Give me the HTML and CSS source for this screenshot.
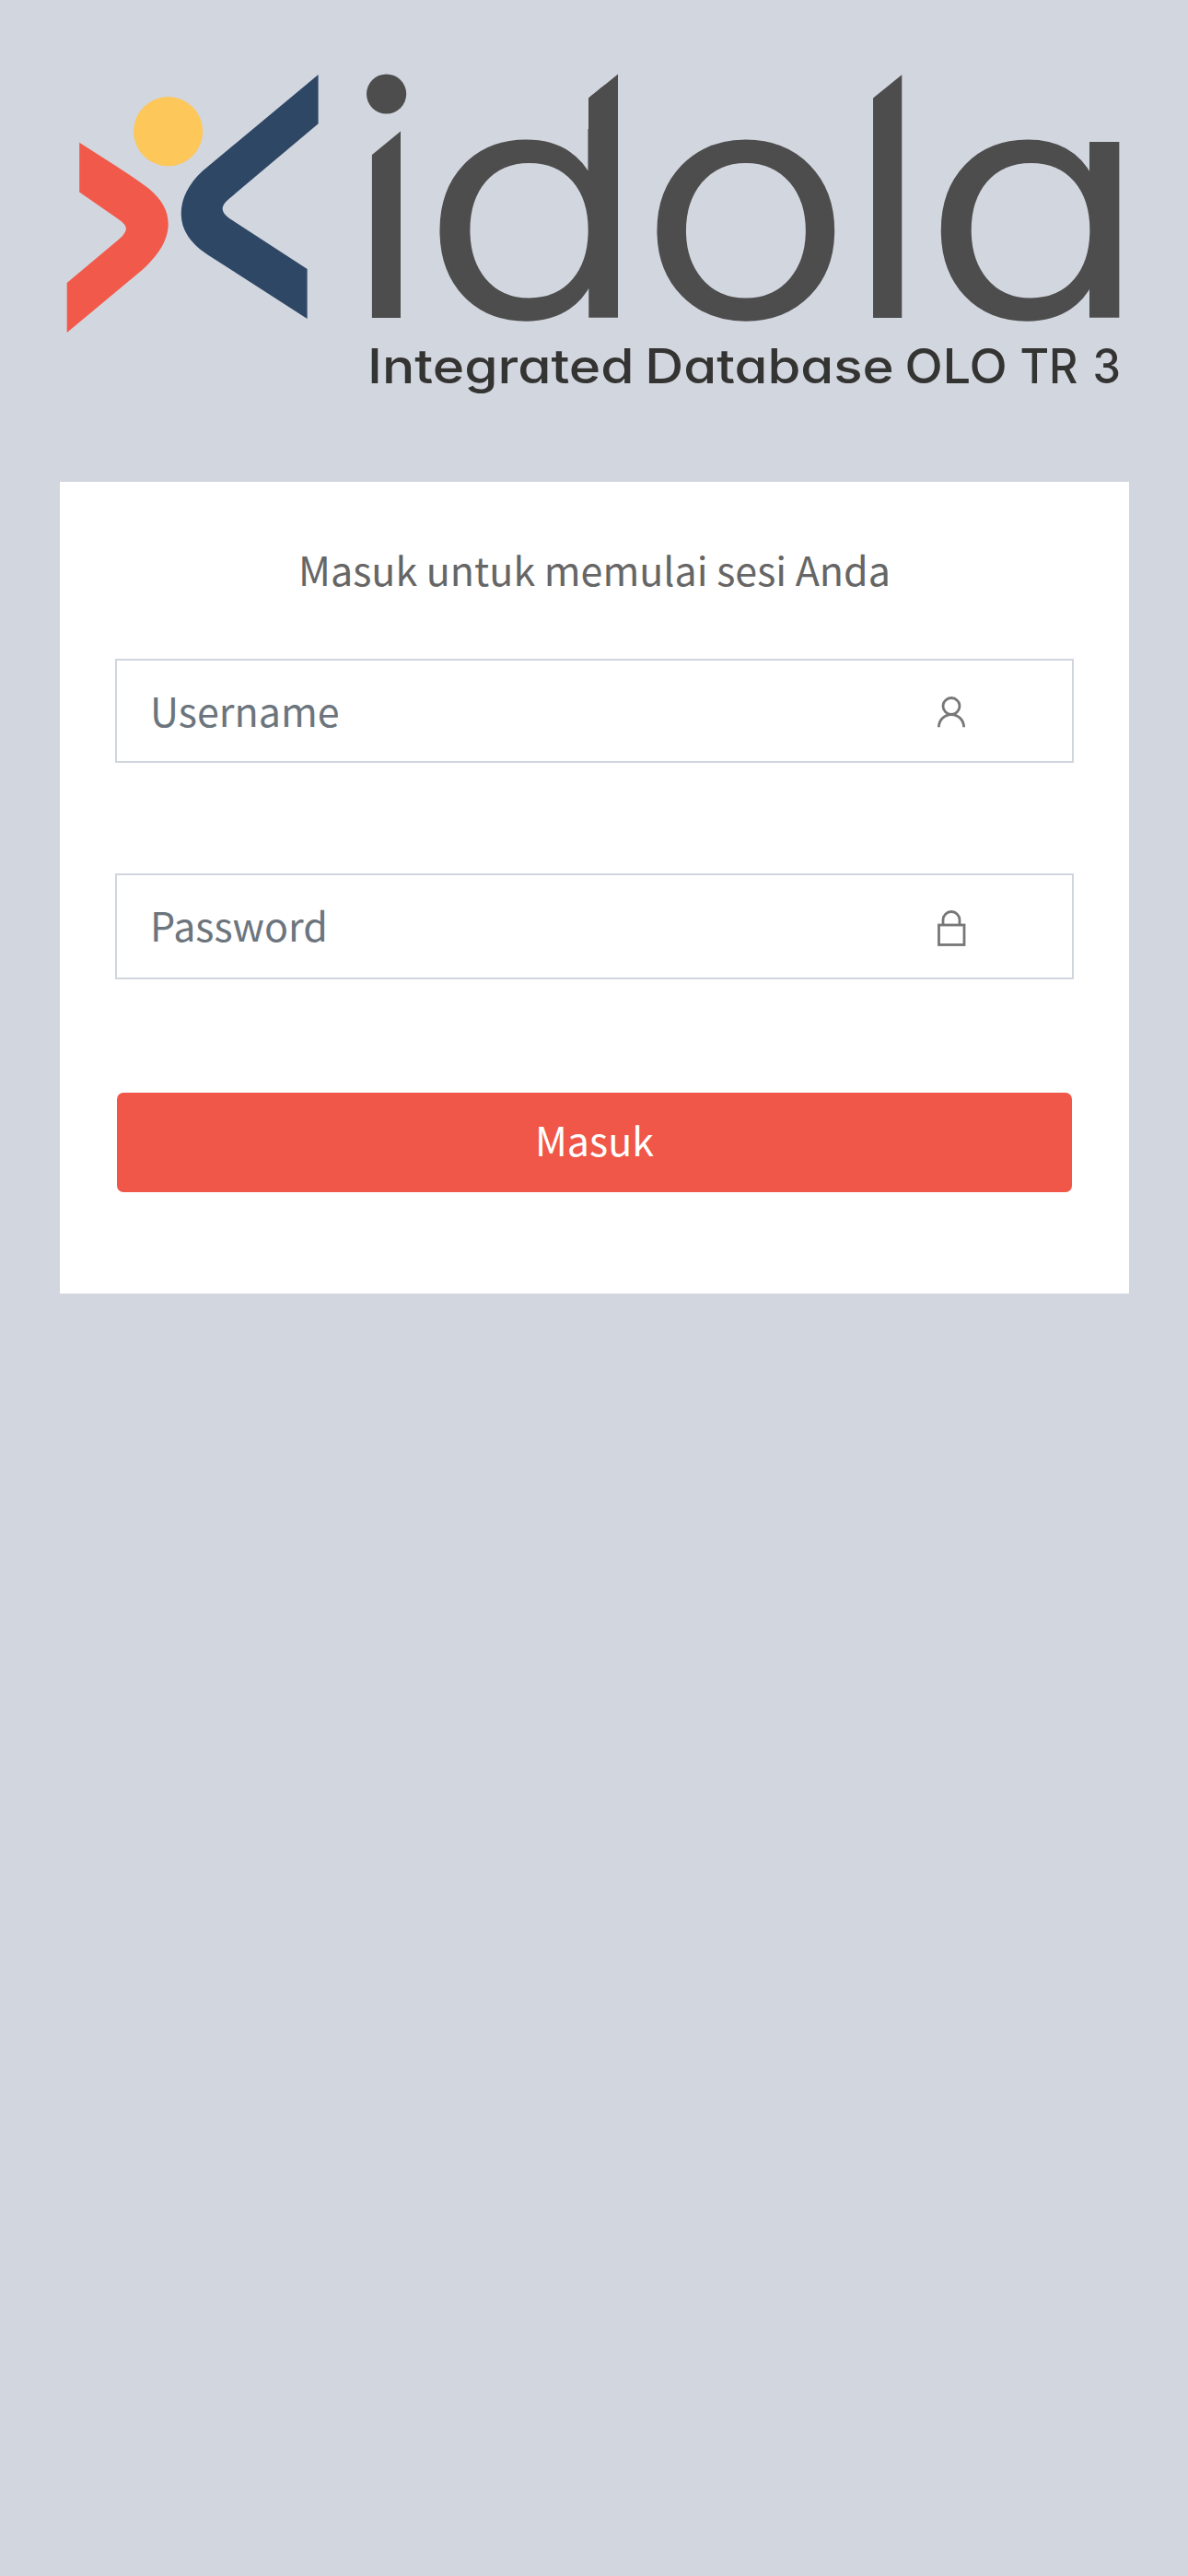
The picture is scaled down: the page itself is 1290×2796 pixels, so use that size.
FILE: index.html
```
<!DOCTYPE html>
<html lang="id">
<head>
  <meta charset="utf-8">
  <title>idola - Masuk</title>
  <link rel="stylesheet" href="styles.css">
</head>
<body>
  <main class="login">
    <svg class="logo" viewBox="65 0 1162 523" role="img" aria-label="idola">
      <defs>
        <clipPath id="cut-i"><path d="M403.7 168.3 435 142.5V345H403.7Z"/></clipPath>
        <clipPath id="cut-d"><path d="M470 140H639V106.5L671 80.5V400H470Z"/></clipPath>
        <clipPath id="cut-l"><path d="M948 106.5 979.5 81V345H948Z"/></clipPath>
      </defs>

      <!-- figure mark -->
      <path class="mark-red" d="M86.2 154.7 128 181.5Q151 196.500 162 205C176 217 182.7 229 182.7 243C182.7 260 173 276 155 292.5L72.7 361V307L128.5 260.2C140.500 250 139 245 128 237.500L86.200 208.500Z"/>
      <path class="mark-navy" d="M345.600 81V134.300L248.500 216C239 224 239.500 230 249 237L333.600 292V346L225.500 276.500C206 263.500 196.700 249 196.700 232C196.700 215 205 199.500 220 185.500Z"/>
      <circle class="mark-yellow" cx="182.600" cy="142.700" r="37.600"/>

      <!-- wordmark -->
      <circle class="dot" cx="419.600" cy="102" r="21.600"/>
      <g class="word">
        <g clip-path="url(#cut-i)"><text class="stem" transform="translate(376 345) scale(1.03 1.08)">i</text></g>
        <g clip-path="url(#cut-d)">
          <text class="bowl" transform="translate(458 342.300) scale(1.1655 .978)">d</text>
          <rect x="639" y="78" width="32" height="50"/>
        </g>
        <text class="bowl" transform="translate(694.800 342.300) scale(1.115 .978)">o</text>
        <g clip-path="url(#cut-l)"><text class="stem" transform="translate(920.400 345) scale(1.03 1.05)">l</text></g>
        <text class="bowl" transform="translate(1002.300 342.300) scale(1.1655 .978)">a</text>
      </g>

      <g class="tagline">
        <text x="399" y="415.500" textLength="289.600" lengthAdjust="spacingAndGlyphs">Integrated</text>
        <text x="700.300" y="415.500" textLength="270.500" lengthAdjust="spacingAndGlyphs">Database</text>
        <text x="982.500" y="415.500" textLength="111.300" lengthAdjust="spacingAndGlyphs">OLO</text>
        <text x="1107.500" y="415.500" textLength="63" lengthAdjust="spacingAndGlyphs">TR</text>
        <text x="1186.500" y="415.500" textLength="30.500" lengthAdjust="spacingAndGlyphs">3</text>
      </g>
    </svg>

    <form class="card">
      <p class="intro">Masuk untuk memulai sesi Anda</p>
      <div class="field">
        <input class="input" type="text" placeholder="Username">
        <svg class="icon" viewBox="0 0 40 44"><circle cx="20" cy="16.500" r="9"/><path d="M6.400 39.200A13.600 13.600 0 0 1 33.600 39.200"/></svg>
      </div>
      <div class="field field-password">
        <input class="input" type="password" placeholder="Password">
        <svg class="icon" viewBox="0 0 40 44"><path d="M11 20.500V14.500A9 9 0 0 1 29 14.500V20.500"/><rect x="6.500" y="20" width="27.500" height="21.500"/></svg>
      </div>
      <button class="submit" type="button">Masuk</button>
    </form>
  </main>
</body>
</html>
```
FILE: styles.css
```
* {
  box-sizing: border-box;
}

body {
  margin: 0;
  min-height: 2796px;
  background: #d2d6df;
  font-family: "Noto Sans CJK JP", "Noto Sans", sans-serif;
  font-size: 43px;
}

.login {
  display: flex;
  flex-direction: column;
  width: 1162px;
  margin-left: 65px;
}

.logo {
  display: block;
  width: 1162px;
  height: 523px;
}

.mark-red { fill: #f15a4b; }
.mark-navy { fill: #2e4765; }
.mark-yellow { fill: #fdc75a; }

.dot,
.word {
  fill: #4d4d4d;
}

.word {
  font-family: Inter, sans-serif;
  font-size: 348px;
  font-feature-settings: "cv11" 1;
}

.stem { font-weight: 400; }

.bowl {
  font-weight: 300;
  stroke: #4d4d4d;
  stroke-width: 5px;
  stroke-linejoin: miter;
}

.tagline {
  fill: #343432;
  font-family: Inter, sans-serif;
  font-size: 52px;
  font-weight: 500;
  font-feature-settings: "cv11" 1;
}

.card {
  display: flex;
  flex-direction: column;
  width: 1161px;
  height: 881px;
  padding: 62px 60px 0;
  background: #fff;
}

.intro {
  margin: 0 0 66px;
  line-height: 64px;
  text-align: center;
  color: #666;
}

.field {
  display: flex;
  align-items: center;
  height: 113px;
  padding-right: 111px;
  border: 2px solid #d0d5de;
}

.field-password {
  height: 115px;
  margin-top: 120px;
}

.input {
  flex: 1;
  min-width: 0;
  height: 100%;
  padding: 0 0 3px 36px;
  border: 0;
  outline: 0;
  background: transparent;
  font: inherit;
}

.field-password .input {
  padding-bottom: 5px;
}

.input::placeholder {
  color: #6c757d;
  opacity: 1;
}

.icon {
  width: 40px;
  height: 44px;
  fill: none;
  stroke: #777;
  stroke-width: 2.8px;
}

.submit {
  height: 108.500px;
  margin: 122.500px 2px 0;
  padding: 0 0 7px;
  border: 0;
  border-radius: 7px;
  background: #f05748;
  color: #fff;
  font: inherit;
}
```
